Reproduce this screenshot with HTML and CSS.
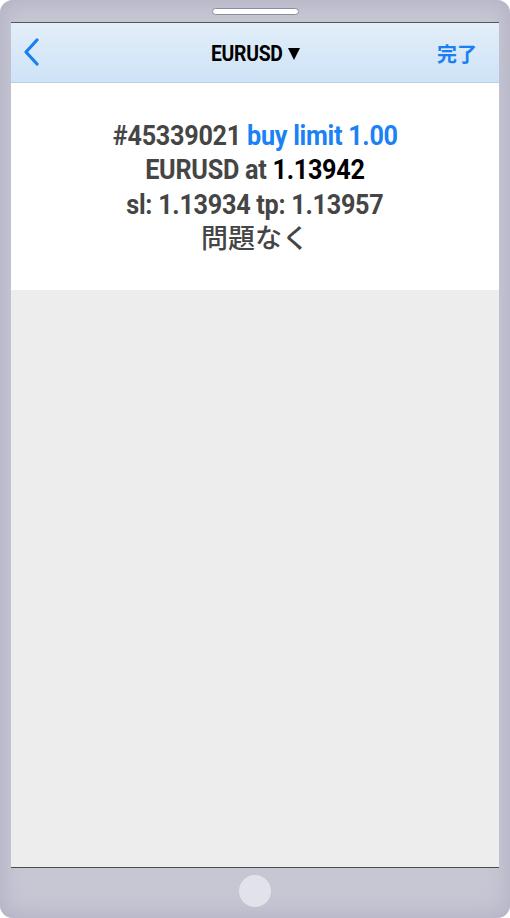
FILE: index.html
```html
<!DOCTYPE html>
<html>
<head>
<meta charset="utf-8">
<link rel="stylesheet" href="styles.css">
</head>
<body>
<div class="phone">
  <div class="top-bezel"><div class="speaker"></div></div>
  <div class="screen">
    <div class="navbar">
      <div class="back">
        <svg width="16" height="28" viewBox="0 0 16 28"><path d="M14 2 L3 14 L14 26" fill="none" stroke="#1a7ff0" stroke-width="3.2" stroke-linecap="round" stroke-linejoin="round"/></svg>
      </div>
      <div class="title"><span class="title-text">EURUSD</span><svg class="tri" width="12" height="12" viewBox="0 0 12 12"><path d="M0 0 H12 L6 12 Z" fill="#000"/></svg></div>
      <div class="done">完了</div>
    </div>
    <div class="message">
      <div class="line">#45339021 <span class="blue">buy limit 1.00</span></div>
      <div class="line">EURUSD at <span class="black">1.13942</span></div>
      <div class="line">sl: 1.13934 tp: 1.13957</div>
      <div class="line cjk">問題なく</div>
    </div>
    <div class="empty"></div>
  </div>
  <div class="bottom-bezel"><div class="home"></div></div>
</div>
</body>
</html>
```
FILE: styles.css
```css
html, body { margin: 0; padding: 0; background: #ffffff; }
.phone {
  width: 510px; height: 918px; box-sizing: border-box;
  border-radius: 13px;
  background: #c7c7d4;
  box-shadow: inset 0 0 22px 4px #b3b2c5;
  display: flex; flex-direction: column;
  padding: 0 11px;
  overflow: hidden;
}
.top-bezel { height: 22px; display: flex; justify-content: center; align-items: flex-start; }
.speaker {
  margin-top: 8px; width: 85px; height: 5px;
  background: #ffffff; border: 1px solid #8d8d9a; border-radius: 4px;
}
.screen {
  flex: 1; display: flex; flex-direction: column;
  border-top: 1.5px solid #55575a;
  border-bottom: 1.5px solid #4a4b4e;
  background: #ededed;
}
.navbar {
  height: 59.5px; flex: none; box-sizing: border-box;
  background: linear-gradient(180deg, #e3eef9 0%, #cde3f7 100%);
  border-bottom: 1.5px solid #b9cfe2;
  display: flex; align-items: center; justify-content: space-between;
  padding: 3px 22px 0 12px;
  position: relative;
  font-family: Roboto, "Noto Sans CJK JP", sans-serif;
}
.back { width: 16px; height: 28px; display: flex; margin-top: -3px; }
.title {
  position: absolute; left: 0; right: 0; top: 3px; bottom: 0;
  display: flex; align-items: center; justify-content: center; gap: 6px;
  padding-left: 1px;
}
.title-text {
  font-size: 22px; font-weight: 700; color: #000; letter-spacing: -0.3px;
  display: inline-block; transform: scaleX(0.88); margin: 0 -5px;
}
.tri { margin-top: 1px; }
.done { color: #1a7ff0; font-size: 20px; font-weight: 700; font-family: "Noto Sans CJK JP", sans-serif; }
.message {
  background: #ffffff; flex: none; height: 207px;
  display: flex; flex-direction: column; align-items: center;
  padding-top: 36px; box-sizing: border-box;
  font-family: Roboto, "Noto Sans CJK JP", sans-serif;
  font-weight: 700; font-size: 28px; color: #454545;
  letter-spacing: -0.3px;
}
.line { line-height: 34px; height: 34.5px; white-space: nowrap; transform: scaleX(0.9); }
.line.cjk { transform: none; font-size: 27px; letter-spacing: 0; font-weight: 500; }
.blue { color: #1a82f5; }
.black { color: #000000; }
.empty { flex: 1; }
.bottom-bezel { height: 50px; display: flex; justify-content: center; }
.home {
  margin-top: 7px; width: 32px; height: 32px; border-radius: 50%;
  background: #e2e2ea;
}
```
